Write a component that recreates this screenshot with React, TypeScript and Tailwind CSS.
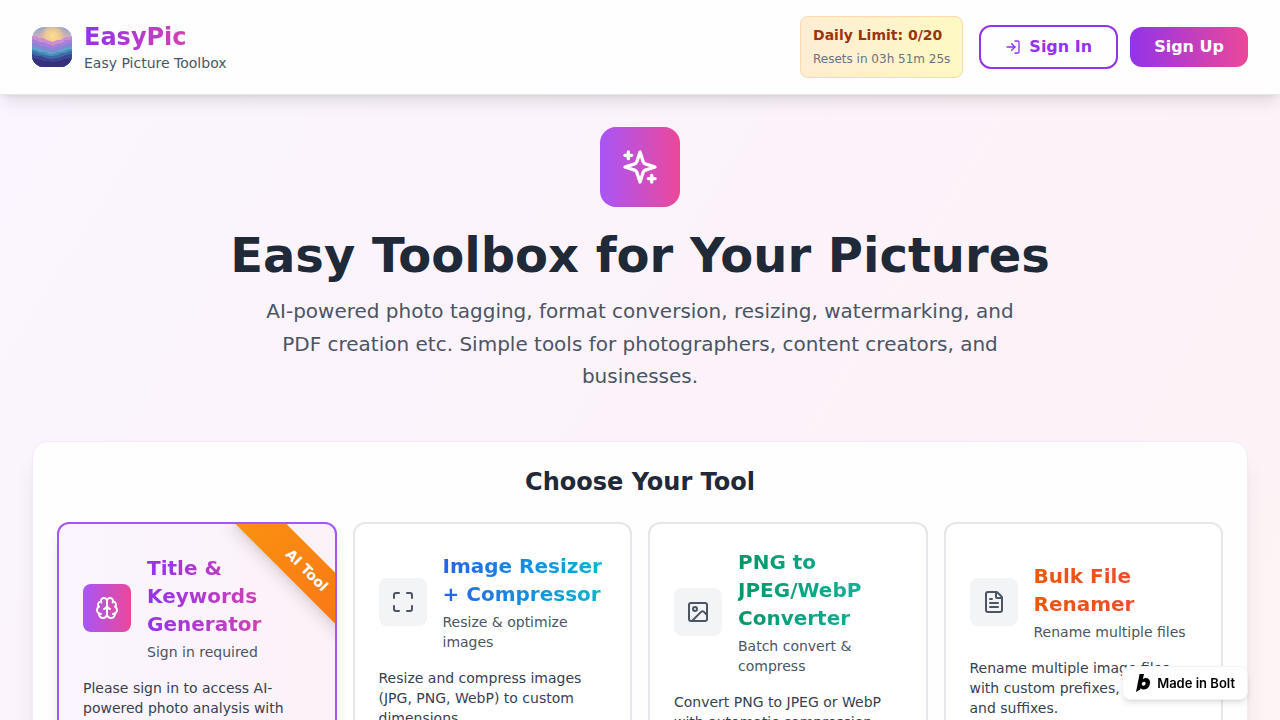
import React from "react";
import { FileText, Image, LogIn, Maximize } from "lucide-react";

const SparklesIcon: React.FC<{ className?: string }> = ({ className }) => (
  <svg
    viewBox="0 0 24 24"
    fill="none"
    stroke="currentColor"
    strokeWidth={2}
    strokeLinecap="round"
    strokeLinejoin="round"
    className={className}
    aria-hidden="true"
  >
    <path d="m12 3-1.912 5.813a2 2 0 0 1-1.275 1.275L3 12l5.813 1.912a2 2 0 0 1 1.275 1.275L12 21l1.912-5.813a2 2 0 0 1 1.275-1.275L21 12l-5.813-1.912a2 2 0 0 1-1.275-1.275L12 3Z" />
    <path d="M5 3v4" />
    <path d="M19 17v4" />
    <path d="M3 5h4" />
    <path d="M17 19h4" />
  </svg>
);

const BrainIcon: React.FC<{ className?: string }> = ({ className }) => (
  <svg
    viewBox="0 0 24 24"
    fill="none"
    stroke="currentColor"
    strokeWidth={2}
    strokeLinecap="round"
    strokeLinejoin="round"
    className={className}
    aria-hidden="true"
  >
    <path d="M12 5a3 3 0 1 0-5.997.125 4 4 0 0 0-2.526 5.77 4 4 0 0 0 .556 6.588A4 4 0 1 0 12 18Z" />
    <path d="M12 5a3 3 0 1 1 5.997.125 4 4 0 0 1 2.526 5.77 4 4 0 0 1-.556 6.588A4 4 0 1 1 12 18Z" />
    <path d="M15 13a4.5 4.5 0 0 1-3-4 4.5 4.5 0 0 1-3 4" />
    <path d="M17.599 6.5a3 3 0 0 0 .399-1.375" />
    <path d="M6.003 5.125A3 3 0 0 0 6.401 6.5" />
    <path d="M3.477 10.896a4 4 0 0 1 .585-.396" />
    <path d="M19.938 10.5a4 4 0 0 1 .585.396" />
    <path d="M6 18a4 4 0 0 1-1.967-.516" />
    <path d="M19.967 17.484A4 4 0 0 1 18 18" />
  </svg>
);

// App logo: layered mountains under a sunrise
const Logo: React.FC = () => (
  <svg viewBox="0 0 40 40" className="w-10 h-10 rounded-xl" role="img" aria-label="EasyPic logo">
    <defs>
      <linearGradient id="sky" x1="0" y1="0" x2="0" y2="1">
        <stop offset="0" stopColor="#86a4d4" />
        <stop offset="0.3" stopColor="#dcb4b4" />
        <stop offset="1" stopColor="#b58ad8" />
      </linearGradient>
      <radialGradient id="sun" cx="0.52" cy="0.22" r="0.36">
        <stop offset="0" stopColor="#ffe08a" />
        <stop offset="0.5" stopColor="#f8cf8c" stopOpacity="0.8" />
        <stop offset="1" stopColor="#f0b090" stopOpacity="0" />
      </radialGradient>
    </defs>
    <rect width="40" height="40" fill="url(#sky)" />
    <rect width="40" height="40" fill="url(#sun)" />
    <path d="M0 9l4 0 3 2 4 0 4 2 6 2 4-2 4 0 4-3 4 0 3-1v31H0z" fill="#c98fd0" />
    <path d="M0 12l4 1 4 2 4 0 4 2 5 2 4-2 5-1 3-3 4 0 3-1v28H0z" fill="#a87fd8" />
    <path d="M0 16l4 0 4 3 5 0 4 2 4 1 4-2 5-1 4-2 3-1 3 0v24H0z" fill="#8288d4" />
    <path d="M0 20l4 1 4 1 4 2 5 1 4 1 5-2 4-1 4-2 3 0 3-1v20H0z" fill="#5fa6cc" />
    <path d="M0 22l4 1 4 2 5 0 4 2 4 0 5-2 4 0 4-2 3-1 3 0v18H0z" fill="#448fb8" />
    <path d="M0 24l4 1 4 2 5 1 4 1 4 0 5-1 4-2 4 0 3-2 3 0v16H0z" fill="#3f6aa6" />
    <path d="M0 27l5 2 4 0 5 2 6 1 5-1 4-1 5-2 6-1v13H0z" fill="#3b4690" />
    <path d="M0 31l6 1 5 2 5 0 5 1 6-1 6-2 7-1v9H0z" fill="#37307c" />
  </svg>
);

const tools = [
  {
    title: "Title & Keywords Generator",
    subtitle: "Sign in required",
    description: "Please sign in to access AI-powered photo analysis with smart keywords.",
    icon: <BrainIcon className="w-6 h-6" />,
    gradient: "from-[#9333ea] to-[#ec4899]",
    ribbon: "AI Tool",
  },
  {
    title: "Image Resizer + Compressor",
    subtitle: "Resize & optimize images",
    description: "Resize and compress images (JPG, PNG, WebP) to custom dimensions.",
    note: "Keeps the quality.",
    icon: <Maximize className="w-6 h-6" />,
    gradient: "from-[#2563eb] to-[#06b6d4]",
  },
  {
    title: "PNG to JPEG/WebP Converter",
    subtitle: "Batch convert & compress",
    description: "Convert PNG to JPEG or WebP with automatic compression and resizing.",
    icon: <Image className="w-6 h-6" />,
    gradient: "from-[#059669] to-[#14b8a6]",
  },
  {
    title: "Bulk File Renamer",
    subtitle: "Rename multiple files",
    description: "Rename multiple image files with custom prefixes, dates, and suffixes.",
    note: "Download as a ZIP.",
    icon: <FileText className="w-6 h-6" />,
    gradient: "from-[#ea580c] to-[#ef4444]",
  },
];

const Header: React.FC = () => (
  <header className="relative bg-white/90 border-b border-[#e6e4ef] shadow-lg">
    <div className="px-8 py-4 flex items-center justify-between">
      <div className="flex items-center gap-3">
        <Logo />
        <div>
          <p className="text-2xl font-bold bg-linear-to-r/srgb from-[#9333ea] to-[#ec4899] bg-clip-text text-transparent">
            EasyPic
          </p>
          <p className="text-sm text-[#4b5563]">Easy Picture Toolbox</p>
        </div>
      </div>

      <div className="flex items-center gap-4">
        <div className="px-3 py-2 rounded-lg border border-[#fed7aa] bg-linear-to-r/srgb from-[#ffedd5] to-[#fef9c3]">
          <p className="text-sm font-semibold text-[#9a3412]">Daily Limit: 0/20</p>
          <p className="mt-1 text-xs leading-5 text-[#6b7280]">Resets in 03h 51m 25s</p>
        </div>
        <div className="flex items-center gap-3">
          <button
            type="button"
            className="flex items-center gap-2 px-6 py-2 rounded-xl border-2 border-[#9333ea] text-[#9333ea] font-semibold"
          >
            <LogIn className="w-4 h-4" />
            Sign In
          </button>
          <button
            type="button"
            className="px-6 py-2 rounded-xl bg-linear-to-r/srgb from-[#9333ea] to-[#ec4899] text-white font-semibold"
          >
            Sign Up
          </button>
        </div>
      </div>
    </div>
  </header>
);

const App: React.FC = () => {
  return (
    <div className="min-h-[300vh] bg-linear-to-br/srgb from-[#faf5ff] via-[#fdf2f8] to-[#fff7ed] font-['DejaVu_Sans',sans-serif]">
      <Header />

      <main className="px-8 py-8">
        {/* Hero */}
        <section className="text-center mb-12">
          <div className="inline-flex align-top p-5 mb-6 rounded-2xl bg-linear-to-r/srgb from-[#a855f7] to-[#ec4899] text-white">
            <SparklesIcon className="w-10 h-10" />
          </div>
          <h1 className="text-5xl font-bold text-[#1f2937] mb-4">Easy Toolbox for Your Pictures</h1>
          <p className="text-xl leading-relaxed text-[#4b5563] max-w-3xl mx-auto">
            AI-powered photo tagging, format conversion, resizing, watermarking, and PDF creation
            etc. Simple tools for photographers, content creators, and businesses.
          </p>
        </section>

        {/* Tool picker */}
        <section className="p-6 rounded-2xl border border-[#f3e8ff] bg-white/90 shadow-xl">
          <h2 className="text-2xl font-bold text-[#1f2937] text-center mb-6">Choose Your Tool</h2>
          <div className="grid grid-cols-2 lg:grid-cols-4 gap-4">
            {tools.map((tool) => (
              <button
                key={tool.title}
                type="button"
                className={`relative overflow-hidden p-6 rounded-xl border-2 text-left ${
                  tool.ribbon
                    ? "border-[#a855f7] bg-linear-to-r/srgb from-[#faf5ff] to-[#fdf2f8] shadow-lg"
                    : "border-[#e5e7eb] bg-white/90"
                }`}
              >
                {tool.ribbon && (
                  <span className="absolute top-7 -right-15 w-44 py-2 rotate-45 bg-linear-to-r/srgb from-[#fb9210] to-[#f97316] text-white text-sm font-bold text-center shadow-lg">
                    {tool.ribbon}
                  </span>
                )}
                <div className="flex items-center gap-4 mb-4">
                  <div
                    className={`p-3 rounded-lg ${
                      tool.ribbon
                        ? "bg-linear-to-r/srgb from-[#a855f7] to-[#ec4899] text-white"
                        : "bg-[#f3f4f6] text-[#4b5563]"
                    }`}
                  >
                    {tool.icon}
                  </div>
                  <div>
                    <h3
                      className={`text-xl font-bold mb-1 bg-linear-to-r/srgb bg-clip-text text-transparent ${tool.gradient}`}
                    >
                      {tool.title}
                    </h3>
                    <p className="text-sm text-[#4b5563]">{tool.subtitle}</p>
                  </div>
                </div>
                <p className={`text-sm text-[#374151] ${tool.ribbon ? "mb-2" : ""}`}>
                  {tool.description}
                </p>
                {tool.note && <p className="text-sm text-[#374151]">{tool.note}</p>}
              </button>
            ))}
          </div>
        </section>
      </main>

      {/* Floating badge */}
      <a
        href="#bolt"
        className="fixed bottom-5 right-8 flex items-center gap-1.5 px-3 py-2 rounded-lg border border-[#eff3f8] bg-white text-black text-[13px] leading-4 font-semibold font-['Inter',sans-serif] shadow-md"
      >
        <svg viewBox="0 0 16 18" className="w-4 h-4.5 -my-1" aria-hidden="true">
          <path
            fillRule="evenodd"
            d="M4.600 0h4.400L7.800 5.400c.9-.9 1.900-1.300 3-1.300 2.700 0 4.200 1.800 4.200 4.400 0 3.700-2.500 7-6 7-1.500 0-2.700-.5-3.400-1.500L5.200 15.600 1 18zM8.900 7.700c-1.200 0-2.100 1-2.100 2.300 0 1.100.6 1.700 1.600 1.700 1.300 0 2.200-1.100 2.200-2.400 0-1-.7-1.600-1.700-1.600z"
          />
        </svg>
        Made in Bolt
      </a>
    </div>
  );
};

export default App;
